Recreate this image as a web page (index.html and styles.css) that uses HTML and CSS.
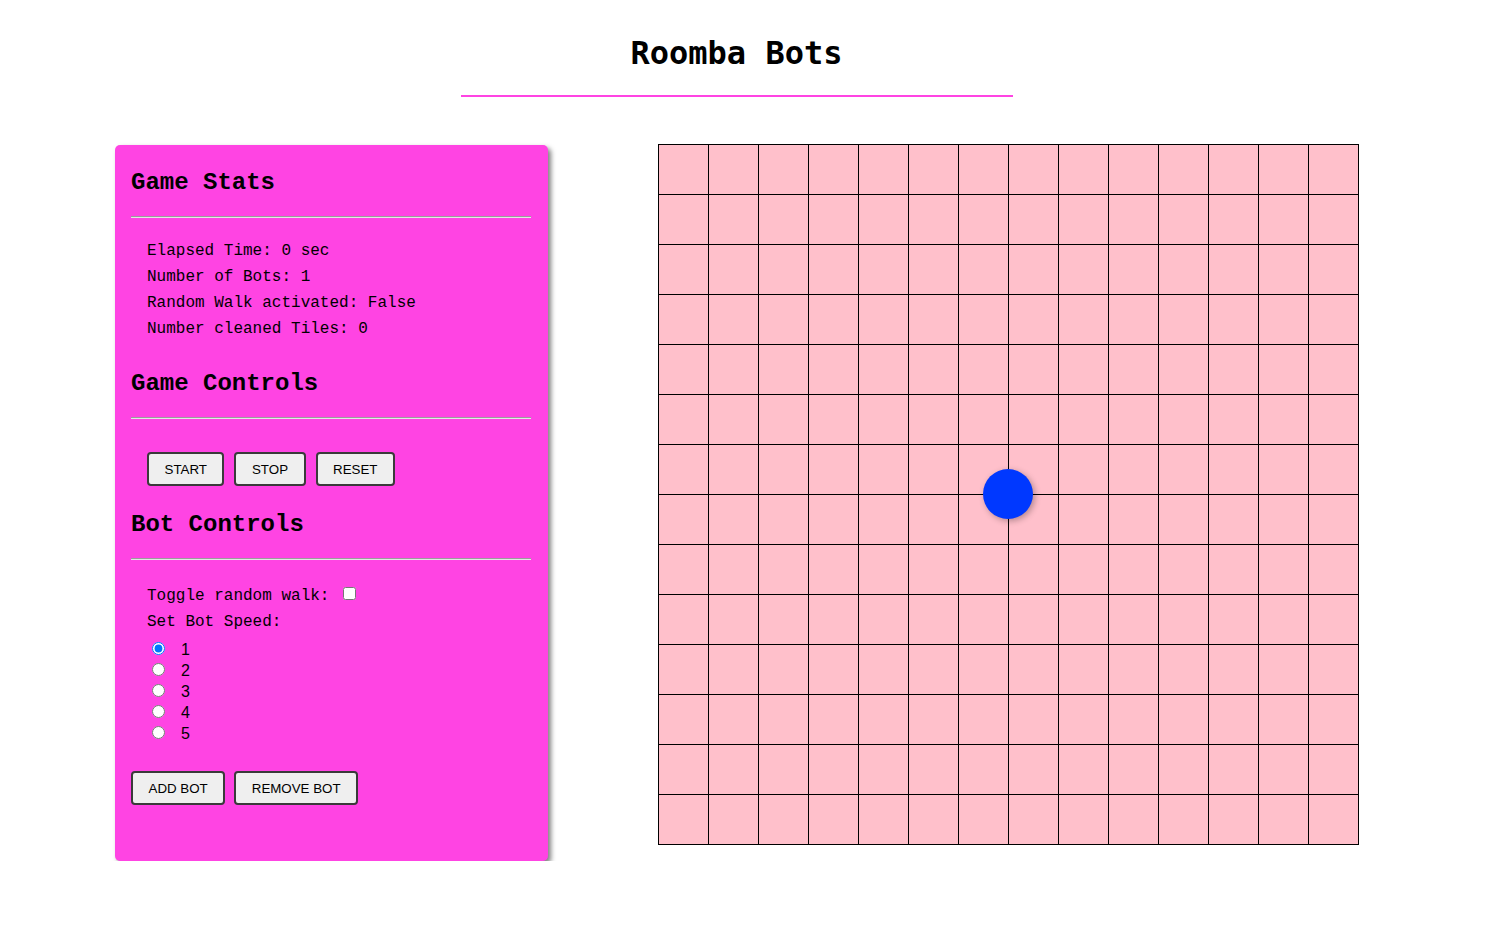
FILE: index.html
```html
<!DOCTYPE html>
<html lang="en">
<head>
<meta charset="utf-8">
<title>Roomba Bots</title>
<link rel="stylesheet" href="styles.css">
</head>
<body>
<header class="header">
  <h1 class="title">Roomba Bots</h1>
  <div class="title-line"></div>
</header>
<main class="main">
  <section class="panel">
    <h2 class="panel-title">Game Stats</h2>
    <hr class="divider">
    <div class="stats">
      <div class="stat">Elapsed Time: 0 sec</div>
      <div class="stat">Number of Bots: 1</div>
      <div class="stat">Random Walk activated: False</div>
      <div class="stat">Number cleaned Tiles: 0</div>
    </div>
    <h2 class="panel-title title-controls">Game Controls</h2>
    <hr class="divider">
    <div class="button-row game-buttons">
      <button class="btn">START</button>
      <button class="btn">STOP</button>
      <button class="btn">RESET</button>
    </div>
    <h2 class="panel-title title-bot">Bot Controls</h2>
    <hr class="divider">
    <div class="bot-settings">
      <div class="stat">Toggle random walk: <input class="check" type="checkbox"></div>
      <div class="stat">Set Bot Speed:</div>
    </div>
    <div class="speeds">
      <div class="speed"><input class="radio" type="radio" name="speed" checked><label class="speed-label">1</label></div>
      <div class="speed"><input class="radio" type="radio" name="speed"><label class="speed-label">2</label></div>
      <div class="speed"><input class="radio" type="radio" name="speed"><label class="speed-label">3</label></div>
      <div class="speed"><input class="radio" type="radio" name="speed"><label class="speed-label">4</label></div>
      <div class="speed"><input class="radio" type="radio" name="speed"><label class="speed-label">5</label></div>
    </div>
    <div class="button-row bot-buttons">
      <button class="btn">ADD BOT</button>
      <button class="btn">REMOVE BOT</button>
    </div>
  </section>
  <section class="board">
    <div class="cell"></div><div class="cell"></div><div class="cell"></div><div class="cell"></div><div class="cell"></div><div class="cell"></div><div class="cell"></div><div class="cell"></div><div class="cell"></div><div class="cell"></div><div class="cell"></div><div class="cell"></div><div class="cell"></div><div class="cell"></div>
    <div class="cell"></div><div class="cell"></div><div class="cell"></div><div class="cell"></div><div class="cell"></div><div class="cell"></div><div class="cell"></div><div class="cell"></div><div class="cell"></div><div class="cell"></div><div class="cell"></div><div class="cell"></div><div class="cell"></div><div class="cell"></div>
    <div class="cell"></div><div class="cell"></div><div class="cell"></div><div class="cell"></div><div class="cell"></div><div class="cell"></div><div class="cell"></div><div class="cell"></div><div class="cell"></div><div class="cell"></div><div class="cell"></div><div class="cell"></div><div class="cell"></div><div class="cell"></div>
    <div class="cell"></div><div class="cell"></div><div class="cell"></div><div class="cell"></div><div class="cell"></div><div class="cell"></div><div class="cell"></div><div class="cell"></div><div class="cell"></div><div class="cell"></div><div class="cell"></div><div class="cell"></div><div class="cell"></div><div class="cell"></div>
    <div class="cell"></div><div class="cell"></div><div class="cell"></div><div class="cell"></div><div class="cell"></div><div class="cell"></div><div class="cell"></div><div class="cell"></div><div class="cell"></div><div class="cell"></div><div class="cell"></div><div class="cell"></div><div class="cell"></div><div class="cell"></div>
    <div class="cell"></div><div class="cell"></div><div class="cell"></div><div class="cell"></div><div class="cell"></div><div class="cell"></div><div class="cell"></div><div class="cell"></div><div class="cell"></div><div class="cell"></div><div class="cell"></div><div class="cell"></div><div class="cell"></div><div class="cell"></div>
    <div class="cell"></div><div class="cell"></div><div class="cell"></div><div class="cell"></div><div class="cell"></div><div class="cell"></div><div class="cell"></div><div class="cell"></div><div class="cell"></div><div class="cell"></div><div class="cell"></div><div class="cell"></div><div class="cell"></div><div class="cell"></div>
    <div class="cell"></div><div class="cell"></div><div class="cell"></div><div class="cell"></div><div class="cell"></div><div class="cell"></div><div class="cell"></div><div class="cell"></div><div class="cell"></div><div class="cell"></div><div class="cell"></div><div class="cell"></div><div class="cell"></div><div class="cell"></div>
    <div class="cell"></div><div class="cell"></div><div class="cell"></div><div class="cell"></div><div class="cell"></div><div class="cell"></div><div class="cell"></div><div class="cell"></div><div class="cell"></div><div class="cell"></div><div class="cell"></div><div class="cell"></div><div class="cell"></div><div class="cell"></div>
    <div class="cell"></div><div class="cell"></div><div class="cell"></div><div class="cell"></div><div class="cell"></div><div class="cell"></div><div class="cell"></div><div class="cell"></div><div class="cell"></div><div class="cell"></div><div class="cell"></div><div class="cell"></div><div class="cell"></div><div class="cell"></div>
    <div class="cell"></div><div class="cell"></div><div class="cell"></div><div class="cell"></div><div class="cell"></div><div class="cell"></div><div class="cell"></div><div class="cell"></div><div class="cell"></div><div class="cell"></div><div class="cell"></div><div class="cell"></div><div class="cell"></div><div class="cell"></div>
    <div class="cell"></div><div class="cell"></div><div class="cell"></div><div class="cell"></div><div class="cell"></div><div class="cell"></div><div class="cell"></div><div class="cell"></div><div class="cell"></div><div class="cell"></div><div class="cell"></div><div class="cell"></div><div class="cell"></div><div class="cell"></div>
    <div class="cell"></div><div class="cell"></div><div class="cell"></div><div class="cell"></div><div class="cell"></div><div class="cell"></div><div class="cell"></div><div class="cell"></div><div class="cell"></div><div class="cell"></div><div class="cell"></div><div class="cell"></div><div class="cell"></div><div class="cell"></div>
    <div class="cell"></div><div class="cell"></div><div class="cell"></div><div class="cell"></div><div class="cell"></div><div class="cell"></div><div class="cell"></div><div class="cell"></div><div class="cell"></div><div class="cell"></div><div class="cell"></div><div class="cell"></div><div class="cell"></div><div class="cell"></div>
    <div class="bot"></div>
  </section>
</main>
</body>
</html>
```
FILE: styles.css
```css
html, body {
  margin: 0;
  padding: 0;
  background: #ffffff;
}

body {
  font-family: "Liberation Mono", "Courier New", monospace;
  color: #000;
}

.header {
  display: flex;
  flex-direction: column;
  align-items: center;
  padding: 35px 27px 0 0;
}

.title {
  margin: 0;
  font-family: "DejaVu Sans Mono", monospace;
  font-weight: bold;
  font-size: 32px;
  line-height: 37px;
}

.title-line {
  width: 552px;
  height: 2px;
  margin-top: 23px;
  background: #ff44e3;
}

.main {
  display: flex;
  align-items: flex-start;
  gap: 110px;
  padding-left: 115px;
  margin-top: 47px;
}

.panel {
  box-sizing: border-box;
  width: 433px;
  margin-top: 1px;
  padding: 24px 17px 56px 16px;
  background: #ff44e3;
  border-radius: 5px;
  box-shadow: 3px 3px 5px rgba(0, 0, 0, 0.5);
}

.panel-title {
  margin: 0;
  font-family: "Liberation Mono", monospace;
  font-weight: bold;
  font-size: 24px;
  line-height: 27px;
}

.title-controls {
  margin-top: 28px;
}

.title-bot {
  margin-top: 25px;
}

.divider {
  height: 0;
  margin: 20px 0 0;
  border: none;
  border-top: 1px solid #9c9c9c;
  border-bottom: 1px solid #e6e6e6;
}

.stats {
  margin-top: 20px;
  padding-left: 16px;
}

.stat {
  font-size: 16px;
  line-height: 26px;
  white-space: pre;
}

.button-row {
  display: flex;
}

.game-buttons {
  margin-top: 33px;
  padding-left: 16px;
  gap: 10px;
}

.bot-buttons {
  margin-top: 28px;
  gap: 9px;
}

.btn {
  box-sizing: border-box;
  height: 34px;
  padding: 0 15.5px;
  font-family: "Liberation Sans", Arial, sans-serif;
  font-size: 13.333px;
  color: #000;
  background: #efefef;
  border: 2px solid #3a3a3a;
  border-radius: 4px;
}

.bot-settings {
  margin-top: 23px;
  padding-left: 16px;
}

.check {
  width: 13px;
  height: 13px;
  margin: 0 3px 0 4px;
  vertical-align: baseline;
}

.speeds {
  margin-top: 3px;
  padding-left: 16px;
}

.speed {
  display: flex;
  align-items: center;
  height: 21px;
}

.radio {
  width: 13px;
  height: 13px;
  margin: 0 0 0 5px;
}

.speed-label {
  margin-left: 16px;
  font-family: "Liberation Sans", Arial, sans-serif;
  font-size: 16px;
  line-height: 18px;
  padding-top: 3px;
}

.board {
  position: relative;
  display: grid;
  grid-template-columns: repeat(14, 49px);
  grid-auto-rows: 49px;
  gap: 1px;
  padding: 1px;
  background: #000;
}

.cell {
  background: #ffc0cb;
}

.bot {
  position: absolute;
  left: 325px;
  top: 325px;
  width: 50px;
  height: 50px;
  border-radius: 50%;
  background: #0038ff;
  box-shadow: 2px 2px 6px rgba(0, 0, 0, 0.3);
}
```
